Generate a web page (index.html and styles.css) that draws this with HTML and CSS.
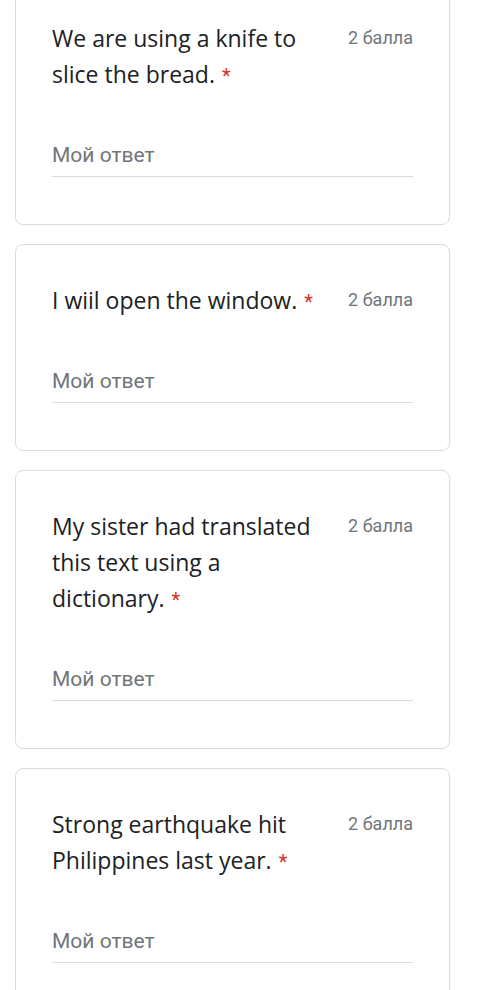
FILE: index.html
```html
<!DOCTYPE html>
<html lang="ru">
<head>
    <meta charset="UTF-8">
    <meta name="viewport" content="width=device-width, initial-scale=1.0">
    <title>Тест</title>
    <link rel="stylesheet" href="styles.css">
</head>
<body>
    <div class="questions">
        <div class="question">
            <div class="question-head">
                <div class="question-title">We are using a knife to slice the bread.<span class="required">*</span></div>
                <div class="question-points">2 балла</div>
            </div>
            <div class="answer">Мой ответ</div>
        </div>
        <div class="question">
            <div class="question-head">
                <div class="question-title">I wiil open the window.<span class="required">*</span></div>
                <div class="question-points">2 балла</div>
            </div>
            <div class="answer">Мой ответ</div>
        </div>
        <div class="question">
            <div class="question-head">
                <div class="question-title">My sister had translated this text using a dictionary.<span class="required">*</span></div>
                <div class="question-points">2 балла</div>
            </div>
            <div class="answer">Мой ответ</div>
        </div>
        <div class="question">
            <div class="question-head">
                <div class="question-title">Strong earthquake hit Philippines last year.<span class="required">*</span></div>
                <div class="question-points">2 балла</div>
            </div>
            <div class="answer">Мой ответ</div>
        </div>
    </div>
</body>
</html>
```

FILE: styles.css
```css
body {
    margin: 0;
    background-color: #fff;
    color: #202124;
    font-family: Roboto, "Liberation Sans", sans-serif;
}
.questions {
    margin-top: -18px;
    padding: 0 38px 0 15px;
    display: flex;
    flex-direction: column;
    gap: 19px;
}
.question {
    border: 1px solid #dadce0;
    border-radius: 8px;
    padding: 37px 36px 47px 36px;
}
.question-head {
    display: flex;
    align-items: flex-start;
}
.question-title {
    flex: 1;
    font-family: "Open Sans", Roboto, sans-serif;
    font-size: 23px;
    line-height: 36px;
    margin-right: 24px;
}
.required {
    margin-left: 7px;
    font-family: Roboto, sans-serif;
    font-size: 20px;
    line-height: 1;
    color: #d93025;
}
.question-points {
    font-size: 18px;
    line-height: 36px;
    color: #70757a;
    white-space: nowrap;
}
.answer {
    margin-top: 50px;
    padding-bottom: 8px;
    font-size: 21px;
    line-height: 26px;
    color: #70757a;
    border-bottom: 1px solid #dadce0;
}
```
